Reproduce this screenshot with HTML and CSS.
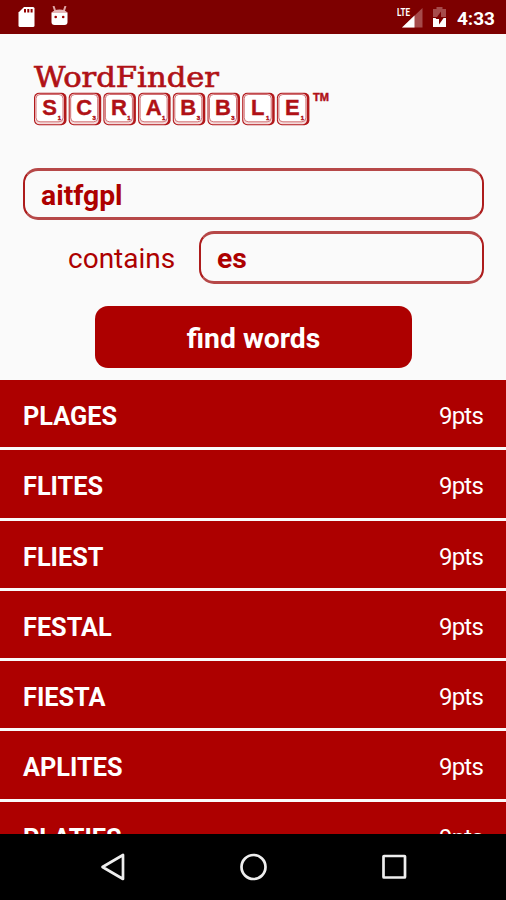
FILE: index.html
```html
<!DOCTYPE html>
<html lang="en">
<head>
<meta charset="utf-8">
<title>WordFinder</title>
<link rel="stylesheet" href="styles.css">
</head>
<body>
<div class="status">
  <svg class="sd" width="17" height="22" viewBox="0 0 17 22"><path fill="#fff" d="M6 1h9q1.500 0 1.500 1.500v17q0 1.500-1.500 1.500H2Q.5 21 .5 19.500V6.500z"/><path fill="#930000" d="M6 3h2v3.500H6zM9.300 3h2v3.500h-2zM12.600 3h2v3.500h-2z"/></svg>
  <svg class="droid" width="18" height="21" viewBox="0 0 18 21"><path fill="#fff" d="M1.500 6.500h16v9.500q0 3-3 3h-10q-3 0-3-3z"/><path fill="none" stroke="#dfa5a5" stroke-width="2" d="M3.500 0l2 6M15.500 0l-2 6"/><path fill="#e5b5b5" d="M1.500 7q2-3.500 8-3.500t8 3.500z"/><circle cx="5.700" cy="11" r="1.300" fill="#a00000"/><circle cx="13.200" cy="11" r="1.300" fill="#a00000"/></svg>
  <svg class="signal" width="27" height="23" viewBox="0 0 27 23"><path fill="#a64b4b" d="M25.500 2v19.500H5z"/><path fill="#fff" d="M17.500 9.600v11.900H5z"/><text class="lte" x="0" y="10" textLength="13" lengthAdjust="spacingAndGlyphs">LTE</text></svg>
  <svg class="battery" width="15" height="20" viewBox="0 0 15 20"><path fill="#a64b4b" d="M4.500 0h6v2H14v8H1V2h3.500z"/><path fill="#fff" d="M1 11h13v9H1z"/><path fill="#7d0000" d="M9 4.500l-5.500 7.500H7v5.500l5-7H9z"/></svg>
  <span class="clock">4:33</span>
</div>
<main>
  <svg class="logo" width="300" height="66" viewBox="0 0 300 66">
    <defs>
      <g id="tile"><rect x="1" y=".5" width="32.500" height="32.500" rx="5" fill="#b2191c"/><rect x="2" y="1.500" width="29" height="30.500" rx="4.500" fill="#f4dada"/><rect x="3" y="2.200" width="27" height="27.300" rx="4" fill="#fff" stroke="#c65155" stroke-width=".8"/></g>
    </defs>
    <text class="brand" x="4" y="23.500" textLength="185" lengthAdjust="spacingAndGlyphs">WordFinder</text>
    <g class="tiles">
      <g transform="translate(3 29.300)"><use href="#tile"/><text x="16.500" y="23">S</text><text class="pt" x="26.500" y="28">1</text></g>
      <g transform="translate(37.700 29.300)"><use href="#tile"/><text x="16.500" y="23">C</text><text class="pt" x="26.500" y="28">3</text></g>
      <g transform="translate(72.400 29.300)"><use href="#tile"/><text x="16.500" y="23">R</text><text class="pt" x="26.500" y="28">1</text></g>
      <g transform="translate(107.100 29.300)"><use href="#tile"/><text x="16.500" y="23">A</text><text class="pt" x="26.500" y="28">1</text></g>
      <g transform="translate(141.800 29.300)"><use href="#tile"/><text x="16.500" y="23">B</text><text class="pt" x="26.500" y="28">3</text></g>
      <g transform="translate(176.500 29.300)"><use href="#tile"/><text x="16.500" y="23">B</text><text class="pt" x="26.500" y="28">3</text></g>
      <g transform="translate(211.200 29.300)"><use href="#tile"/><text x="16.500" y="23">L</text><text class="pt" x="26.500" y="28">1</text></g>
      <g transform="translate(245.900 29.300)"><use href="#tile"/><text x="16.500" y="23">E</text><text class="pt" x="26.500" y="28">1</text></g>
    </g>
    <text class="tm" x="283" y="38" textLength="16" lengthAdjust="spacingAndGlyphs">TM</text>
  </svg>
  <div class="field">aitfgpl</div>
  <div class="line"><span class="label">contains</span><div class="field">es</div></div>
  <div class="find">find words</div>
</main>
<div class="results">
  <div class="row"><b>PLAGES</b><span>9pts</span></div>
  <div class="row"><b>FLITES</b><span>9pts</span></div>
  <div class="row"><b>FLIEST</b><span>9pts</span></div>
  <div class="row"><b>FESTAL</b><span>9pts</span></div>
  <div class="row"><b>FIESTA</b><span>9pts</span></div>
  <div class="row"><b>APLITES</b><span>9pts</span></div>
  <div class="row"><b>PLATIES</b><span>9pts</span></div>
</div>
<nav>
  <svg width="28" height="30" viewBox="0 0 28 30"><path d="M24 3v24L3.500 15z"/></svg>
  <svg width="28" height="30" viewBox="0 0 28 30"><circle cx="13.500" cy="15" r="12"/></svg>
  <svg width="28" height="30" viewBox="0 0 28 30"><rect x="3.500" y="4" width="21.500" height="21.500" rx=".5"/></svg>
</nav>
</body>
</html>
```
FILE: styles.css
```css
* { box-sizing: border-box; }
body {
  margin: 0;
  width: 506px;
  height: 900px;
  overflow: hidden;
  display: flex;
  flex-direction: column;
  background: #fafafa;
  font-family: Roboto, sans-serif;
}
svg { display: block; flex: none; }
.status {
  height: 34px;
  flex: none;
  display: flex;
  align-items: flex-start;
  padding: 6px 11px 0 18px;
  background: #7d0000;
  color: #fff;
}
.droid { margin-left: 15px; }
.signal { margin-left: auto; }
.battery { margin: 1px 10px 0 8px; }
.clock { font-size: 19px; font-weight: 700; line-height: 26px; }
.lte { font: 700 10px Roboto, sans-serif; fill: #fff; }
main {
  height: 346px;
  flex: none;
  padding: 29px 22px 0 23px;
  display: flex;
  flex-direction: column;
  color: #ad0000;
}
.logo { margin-left: 7px; }
.brand { font: 28px "DejaVu Serif Condensed", "DejaVu Serif", serif; fill: #b01116; stroke: #b01116; stroke-width: .6px; }
.tiles text { font: 700 22px "Liberation Sans", sans-serif; text-anchor: middle; fill: #b01116; stroke: #b01116; stroke-width: .4px; }
.tiles .pt { font-size: 6px; }
.tm { font: 700 10px "Liberation Sans", sans-serif; fill: #b01116; stroke: #b01116; stroke-width: .4px; }
.field {
  height: 52px;
  flex: none;
  border: solid #ad1c1c;
  border-width: 3px 2px;
  border-color: #b64848 #ad1c1c;
  border-radius: 15px;
  padding-left: 16px;
  font-size: 28.300px;
  font-weight: 700;
  line-height: 49px;
}
.logo + .field { margin-top: 39px; }
.line { display: flex; margin-top: 11px; }
.label { width: 176px; padding-left: 45px; font-size: 28px; line-height: 55px; }
.line .field { flex: 1; height: 53px; }
.find {
  width: 317px;
  height: 62px;
  margin: 22px 0 0 72px;
  border-radius: 13px;
  background: #ad0000;
  color: #fff;
  font-size: 28.300px;
  font-weight: 700;
  line-height: 65px;
  text-align: center;
}
.line { height: 53px; }
.results { height: 454px; flex: none; overflow: hidden; background: #ad0000; color: #fff; }
.row {
  height: 70.300px;
  display: flex;
  justify-content: space-between;
  border-bottom: 3px solid #fafafa;
  padding: 0 23px 0 23px;
  line-height: 73px;
  font-size: 25.300px;
}
.row span { font-size: 24px; letter-spacing: -.8px; }
nav {
  height: 66px;
  flex: none;
  display: flex;
  justify-content: space-between;
  padding: 18px 98px 0 99px;
  background: #000;
}
nav svg { fill: none; stroke: #eee; stroke-width: 2.700; stroke-linejoin: round; }
```
